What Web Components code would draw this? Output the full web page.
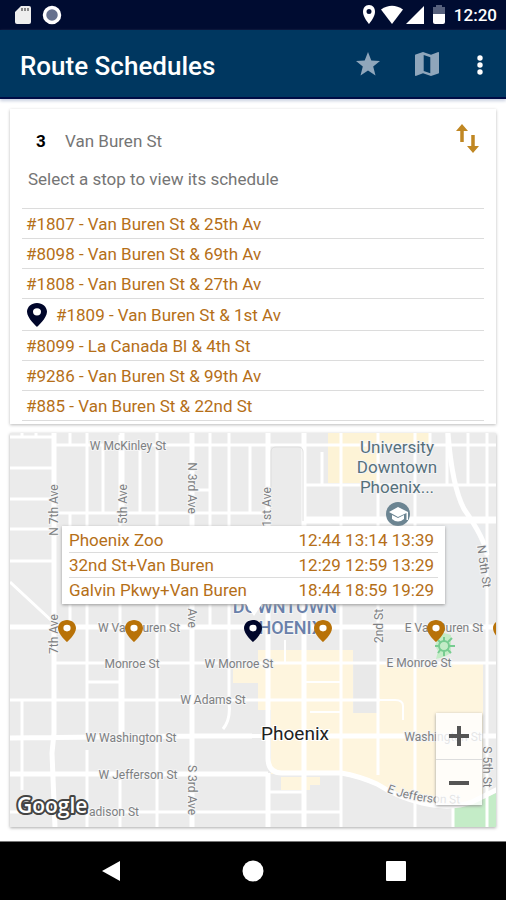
<!DOCTYPE html>
<html lang="en">
<head>
<meta charset="utf-8">
<meta name="viewport" content="width=device-width, initial-scale=1">
<title>Route Schedules</title>
<style>
  :root {
    --color-status: #000c31;
    --color-bar: #003760;
    --color-accent: #b56f18;
    --color-muted: #757575;
    --color-line: #dcdcdc;
  }

  body {
    margin: 0;
    font-family: Roboto, "Liberation Sans", sans-serif;
    background-color: #fff;
  }
</style>
</head>
<body>
<transit-app></transit-app>

<script>
const PIN_PATH = 'M12 0C5.400 0 0 5.200 0 11.800C0 20.500 12 32 12 32S24 20.500 24 11.800C24 5.200 18.600 0 12 0Z M12 16.500A4.800 4.800 0 1 1 12 6.900A4.800 4.800 0 0 1 12 16.500Z';

const STOPS = [
  { id: '1807', name: 'Van Buren St & 25th Av' },
  { id: '8098', name: 'Van Buren St & 69th Av' },
  { id: '1808', name: 'Van Buren St & 27th Av' },
  { id: '1809', name: 'Van Buren St & 1st Av', selected: true },
  { id: '8099', name: 'La Canada Bl & 4th St' },
  { id: '9286', name: 'Van Buren St & 99th Av' },
  { id: '885', name: 'Van Buren St & 22nd St' }
];

const DEPARTURES = [
  { stop: 'Phoenix Zoo', times: '12:44 13:14 13:39' },
  { stop: '32nd St+Van Buren', times: '12:29 12:59 13:29' },
  { stop: 'Galvin Pkwy+Van Buren', times: '18:44 18:59 19:29' }
];

class StatusBar extends HTMLElement {
  constructor () {
    super();
    this.attachShadow({ mode: 'open' });
  }

  connectedCallback () {
    this.shadowRoot.innerHTML = `
    <style>
      :host {
        display: flex;
        justify-content: space-between;
        align-items: center;
        height: 30px;
        padding: 0 9px 0 14px;
        background-color: var(--color-status);
        color: #fff;
        font-size: 17px;
        font-weight: 500;
      }
      div { display: flex; align-items: center; }
      .left { gap: 11px; }
      .right { gap: 3px; }
      .time { margin-left: 4px; line-height: 32px; }
      svg { display: block; }
    </style>
    <div class="left">
      <svg width="17" height="20" viewBox="0 0 17 20"><path d="M7 1h8q2 0 2 2v14q0 2-2 2H3q-2 0-2-2V7z" fill="#eee"/><path d="M8 3v3M11 3v3M14 3v3" stroke="#666" stroke-width="1.500"/></svg>
      <svg width="20" height="20" viewBox="0 0 20 20"><circle cx="10" cy="10" r="7.500" fill="#66718e" stroke="#fff" stroke-width="3.500"/></svg>
    </div>
    <div class="right">
      <svg width="18" height="20" viewBox="0 0 18 20"><path d="M9 0C5 0 3 3 3 7c0 5 6 12 6 12s6-7 6-12c0-4-2-7-6-7zm0 9a2.500 2.500 0 1 1 0-5 2.500 2.500 0 0 1 0 5z" fill="#fff"/></svg>
      <svg width="22" height="20" viewBox="0 0 22 20"><path d="M0 4.500Q11-3 22 4.500L11 19z" fill="#fff"/></svg>
      <svg width="18" height="20" viewBox="0 0 18 20"><path d="M18 1v18H0z" fill="#fff"/></svg>
      <svg width="20" height="20" viewBox="0 0 20 20"><path d="M9 0h6v2h3v7H6V2h3z" fill="#56607c"/><path d="M6 9h12v8q0 2-2 2H8q-2 0-2-2z" fill="#fff"/></svg>
      <span class="time">12:20</span>
    </div>`;
  }
}

class AppBar extends HTMLElement {
  constructor () {
    super();
    this.attachShadow({ mode: 'open' });
  }

  connectedCallback () {
    this.shadowRoot.innerHTML = `
    <style>
      :host {
        display: block;
        background-color: var(--color-bar);
        border-bottom: 2px solid #000c45;
        box-shadow: 0 2px 3px #c9d0e0;
        color: #fff;
      }
      header {
        display: flex;
        align-items: center;
        height: 67px;
        padding: 0 20px;
      }
      h1 { flex: 1; margin: 0; padding-top: 4px; font-size: 26px; font-weight: 500; line-height: 32px; }
      nav { display: flex; align-items: center; gap: 35px; }
      button { display: block; padding: 0; border: 0; background: none; }
      svg { display: block; fill: #8fa6bb; }
      .more { fill: #fff; }
    </style>
    <header>
      <h1><slot></slot></h1>
      <nav>
        <button aria-label="Favorite"><svg width="24" height="24" viewBox="0 0 24 24"><path d="M12 0l3.300 8.600L24 9l-6.800 5.500L19.500 23.500 12 18.500 4.500 23.500l2.300-9L0 9l8.700-.4z"/></svg></button>
        <button aria-label="Map"><svg width="24" height="24" viewBox="0 0 24 24"><path fill-rule="evenodd" d="M23.300 0L16 2.800 8 0 .6 2.500Q0 2.700 0 3.300V23.300Q0 24 .7 24L8 21.200 16 24l7.400-2.500q.6-.2.6-.8V.7Q24 0 23.300 0zM8.700 3l6.600 2.300v15.900l-6.600-2.300z"/></svg></button>
        <button aria-label="More options"><svg class="more" width="12" height="24" viewBox="0 0 12 24"><circle cx="6" cy="6" r="2.700"/><circle cx="6" cy="13" r="2.700"/><circle cx="6" cy="20" r="2.700"/></svg></button>
      </nav>
    </header>`;
  }
}

class StopItem extends HTMLElement {
  constructor () {
    super();
    this.attachShadow({ mode: 'open' });
  }

  connectedCallback () {
    const icon = this.hasAttribute('selected')
      ? `<svg width="20" height="24" viewBox="0 0 24 32" preserveAspectRatio="none"><path d="${PIN_PATH}" fill-rule="evenodd"/></svg>`
      : '';
    this.shadowRoot.innerHTML = `
    <style>
      :host { display: block; border-bottom: 1px solid var(--color-line); }
      button {
        display: flex;
        align-items: center;
        gap: 9px;
        width: 100%;
        height: 29px;
        padding: 1px 4px 0;
        border: 0;
        background: none;
        font: inherit;
        font-size: 17px;
        color: var(--color-accent);
        text-align: left;
      }
      :host([selected]) button { height: 31px; }
      svg { display: block; margin-left: 1px; fill: #00062a; }
    </style>
    <button>${icon}<span><slot></slot></span></button>`;
  }
}

class RouteCard extends HTMLElement {
  constructor () {
    super();
    this.attachShadow({ mode: 'open' });
  }

  connectedCallback () {
    this.shadowRoot.innerHTML = `
    <style>
      :host {
        display: block;
        padding: 14px 12px 3px;
        background-color: #fff;
        box-shadow: 0 1px 3px #bbb;
      }
      header { display: flex; align-items: center; padding: 0 5px 0 14px; color: var(--color-muted); font-size: 17px; }
      b { width: 29px; padding-top: 4px; color: #000; }
      h2 { flex: 1; margin: 0; padding-top: 4px; font-size: 17px; font-weight: 400; }
      header button { padding: 0; border: 0; background: none; }
      svg { display: block; }
      p { margin: 0; padding: 14px 6px 19px; color: var(--color-muted); font-size: 17px; line-height: 20px; }
      .list { border-top: 1px solid var(--color-line); }
    </style>
    <header>
      <b>${this.getAttribute('number')}</b>
      <h2>${this.getAttribute('name')}</h2>
      <button aria-label="Reverse direction">
        <svg width="23" height="32" viewBox="0 0 23 32" fill="none" stroke="#c08723" stroke-width="3.500"><path d="M6 19V5M17 12v14"/><path d="M0 8L6 1l6 7zM11 23h12l-6 7z" fill="#c08723" stroke="none"/></svg>
      </button>
    </header>
    <p>Select a stop to view its schedule</p>
    <div class="list"><slot></slot></div>`;
  }
}

class DeparturePopup extends HTMLElement {
  constructor () {
    super();
    this.attachShadow({ mode: 'open' });
  }

  connectedCallback () {
    const rows = DEPARTURES.map(d => `<tr><th scope="row">${d.stop}</th><td>${d.times}</td></tr>`).join('');
    this.shadowRoot.innerHTML = `
    <style>
      :host {
        display: block;
        padding: 2px 7px;
        background-color: #fff;
        box-shadow: 0 1px 3px #999;
      }
      /* pointer towards the selected pin */
      :host::after {
        content: '';
        position: absolute;
        top: 100%;
        left: 50%;
        margin-left: -8px;
        border: 8px solid transparent;
        border-top: 12px solid #fff;
        border-bottom: 0;
      }
      table { width: 100%; border-collapse: collapse; font-size: 17px; color: var(--color-accent); }
      th, td { height: 24px; padding: 0; font-weight: 400; white-space: nowrap; }
      th { text-align: left; }
      td { text-align: right; padding-right: 4px; }
      tr + tr { border-top: 1px solid var(--color-line); }
    </style>
    <table>${rows}</table>`;
  }
}

class ZoomControl extends HTMLElement {
  constructor () {
    super();
    this.attachShadow({ mode: 'open' });
  }

  connectedCallback () {
    this.shadowRoot.innerHTML = `
    <style>
      :host { display: flex; flex-direction: column; width: 46px; background-color: rgb(255 255 255 / 80%); box-shadow: 0 1px 3px #999; }
      button { display: flex; align-items: center; justify-content: center; height: 46px; padding: 0; border: 0; background: none; }
      button + button { border-top: 1px solid #ddd; }
      svg { stroke: #555; stroke-width: 4; }
    </style>
    <button aria-label="Zoom in"><svg width="20" height="20"><path d="M0 10h20M10 0v20"/></svg></button>
    <button aria-label="Zoom out"><svg width="20" height="20"><path d="M0 10h20"/></svg></button>`;
  }
}

class StopMap extends HTMLElement {
  constructor () {
    super();
    this.attachShadow({ mode: 'open' });
  }

  pin (x, color) {
    return `<g transform="translate(${x - 9} 620) scale(.75 .69)"><circle cx="12" cy="12" r="6" fill="#fff"/><path d="${PIN_PATH}" fill="${color}" fill-rule="evenodd"/></g>`;
  }

  connectedCallback () {
    const pins = [67, 134, 323, 436, 502].map(x => this.pin(x, '#b87208')).join('');
    this.shadowRoot.innerHTML = `
    <style>
      :host { display: block; position: relative; overflow: hidden; background-color: #ebebeb; box-shadow: 0 1px 3px #aaa; }
      .map { display: block; position: absolute; width: 100%; height: 100%; }
      .roads { fill: none; stroke: #fff; stroke-width: 3; }
      .major { stroke-width: 5; }
      .labels { font-size: 12px; fill: #7d7f82; stroke: #f5f5f5; stroke-width: 2; paint-order: stroke; text-anchor: middle; }
      .campus { font-size: 17px; fill: #56707c; stroke: #f5f5f5; }
      .district { font-size: 18px; font-weight: 500; fill: #6980aa; }
      .city { font-size: 19px; fill: #222; stroke: #fff; }
      .brand { font-family: "Open Sans", Roboto, sans-serif; font-size: 21px; font-weight: 600; fill: #fff; stroke: #444; stroke-width: 4; stroke-linejoin: round; paint-order: stroke; }
      departure-popup { position: absolute; top: 93px; left: 52px; right: 51px; }
      zoom-control { position: absolute; right: 14px; bottom: 22px; }
    </style>
    <svg class="map" viewBox="10 433 486 394" preserveAspectRatio="xMidYMid slice">
      <path fill="#fdf3d6" d="M328 433h102v12h-50v38h-52z"/>
      <path fill="#e9ebed" d="M417 525h68v100h-68z"/>
      <path fill="#fef5de" d="M258 650h95v63h24v-50h106v140h-60l-46-20-36-9h-70V710h-13v-27h-25v-18h25zM281 777h39v8h-10v5h-29z"/>
      <path fill="#e9e9e9" d="M354 665h22v48h-22z"/>
      <path fill="#c4ecc7" d="M453 806q24-2 45-14v36h-45zM438 638l6-5 7 2v18l-7 4-8 2 2-8-3-5z"/>
      <g class="roads">
        <path d="M10 437h42M10 468h42M10 499h42M10 529h42M10 561h42M55 445h443M55 513h212M192 490h18M303 485h195M10 582l43 40M55 663h443M87 682h33M10 700h370M10 812h332M268 792h36"/>
        <path d="M22 433v4M36 433v4M70 433v12M103 445v68M140 445v68M70 513v110M87 433v302M87 750v77M120 435v300M120 780v47M157 433v394M210 433v194M229 433v270q2 16-6 26M250 445v68M22 700v90M322 452v33M341 433v394M378 433v342M415 433v394M430 433v12M447 433v52M468 433v52M487 433v394M453 806v21"/>
        <path d="M304 682h37M310 712h30M378 700h17q8 0 8 6v14M285 640v23" stroke-width="2"/>
        <g class="major">
          <path d="M54 433v300l-2 20 3 74M122 433v90M122 627v110M192 433v394M268 433v325q0 15 14 15h59q18 3 36 11c25 16 64 29 95 18l26-13M268 773v54M304 433v394M10 627h488M10 738l182-2h60M330 736h168M10 774h258"/>
          <path d="M305 520h193" stroke-width="7"/>
          <path d="M448 433q4 53 16 76 21 30 23 46"/>
          <path d="M252 736h78" stroke-width="4"/>
        </g>
        <path d="M271 521v-69q0-5 5-5h22q5 0 5 5v69" stroke="#dedede" stroke-width="1"/>
      </g>
      <g fill="none" stroke="#78cc91" stroke-width="2"><circle cx="444" cy="646" r="5"/><path d="M444 637v4M444 651v5M435 646h4M449 646h6M438 640l3 3M447 649l4 4M438 653l3-4M448 642l4-4"/></g>

      <g class="labels">
        <text x="128" y="450">W McKinley St</text>
        <text transform="translate(58 510) rotate(-90)">N 7th Ave</text>
        <text transform="translate(127 504) rotate(-90)">5th Ave</text>
        <text transform="translate(188 488) rotate(90)">N 3rd Ave</text>
        <text transform="translate(271 507) rotate(-90)">1st Ave</text>
        <text transform="translate(188 618) rotate(90)">Ave</text>
        <text transform="translate(58 634) rotate(-90)">7th Ave</text>
        <text x="139" y="632">W Van Buren St</text>
        <text x="132" y="668">Monroe St</text>
        <text x="239" y="668">W Monroe St</text>
        <text x="213" y="704">W Adams St</text>
        <text x="131" y="742">W Washington St</text>
        <text x="138" y="779">W Jefferson St</text>
        <text x="114" y="816">adison St</text>
        <text transform="translate(188 790) rotate(90)">S 3rd Ave</text>
        <text x="444" y="632">E Van Buren St</text>
        <text x="419" y="667">E Monroe St</text>
        <text transform="translate(383 626) rotate(-90)">2nd St</text>
        <text transform="translate(480 567) rotate(82)">N 5th St</text>
        <text x="443" y="741">Washington St</text>
        <text transform="translate(483 767) rotate(90)">S 5th St</text>
        <path id="jefferson" d="M378 788Q412 806 470 803" fill="none" stroke="none"/>
        <text><textPath href="#jefferson" startOffset="50%">E Jefferson St</textPath></text>
        <g class="campus">
          <text x="397" y="453">University</text>
          <text x="397" y="473">Downtown</text>
          <text x="397" y="493">Phoenix...</text>
        </g>
        <g class="district">
          <text x="285" y="613">DOWNTOWN</text>
          <text x="285" y="634">PHOENIX</text>
        </g>
        <text class="city" x="295" y="740">Phoenix</text>
      </g>
      <circle cx="398" cy="514" r="12" fill="#6c8592"/>
      <path fill="#fff" d="M398 507l10 5v8h-1.500v-7L398 517l-9-5zM392 515l6 3 6-3v4q-6 5-12 0z"/>
      ${pins}
      ${this.pin(253, '#00062a')}
      <text class="brand" x="17" y="813">Google</text>
    </svg>
    <departure-popup></departure-popup>
    <zoom-control></zoom-control>`;
  }
}

class NavBar extends HTMLElement {
  constructor () {
    super();
    this.attachShadow({ mode: 'open' });
  }

  connectedCallback () {
    this.shadowRoot.innerHTML = `
    <style>
      :host { display: block; background-color: #000; border-top: 1px solid #777; }
      nav { display: flex; justify-content: center; align-items: center; gap: 122px; height: 58px; }
      button { display: block; padding: 0; border: 0; background: none; }
      svg { display: block; fill: #fff; }
    </style>
    <nav>
      <button aria-label="Back"><svg width="20" height="22"><path d="M20 1v20L2 11z"/></svg></button>
      <button aria-label="Home"><svg width="22" height="22"><circle cx="11" cy="11" r="10.500"/></svg></button>
      <button aria-label="Recent apps"><svg width="20" height="22"><rect y="1" width="20" height="20" rx="1"/></svg></button>
    </nav>`;
  }
}

class TransitApp extends HTMLElement {
  constructor () {
    super();
    this.attachShadow({ mode: 'open' });
  }

  connectedCallback () {
    const stops = STOPS.map(s =>
      `<stop-item ${s.selected ? 'selected' : ''}>#${s.id} - ${s.name.replace('&', '&amp;')}</stop-item>`).join('');
    this.shadowRoot.innerHTML = `
    <style>
      :host { display: flex; flex-direction: column; min-height: 100vh; }
      main { flex: 1; display: flex; flex-direction: column; gap: 9px; padding: 10px 10px 14px; }
      stop-map { flex: 1; min-height: 240px; }
    </style>
    <status-bar></status-bar>
    <app-bar>Route Schedules</app-bar>
    <main>
      <route-card number="3" name="Van Buren St">${stops}</route-card>
      <stop-map></stop-map>
    </main>
    <nav-bar></nav-bar>`;
  }
}

customElements.define('status-bar', StatusBar);
customElements.define('app-bar', AppBar);
customElements.define('stop-item', StopItem);
customElements.define('route-card', RouteCard);
customElements.define('departure-popup', DeparturePopup);
customElements.define('zoom-control', ZoomControl);
customElements.define('stop-map', StopMap);
customElements.define('nav-bar', NavBar);
customElements.define('transit-app', TransitApp);
</script>
</body>
</html>
